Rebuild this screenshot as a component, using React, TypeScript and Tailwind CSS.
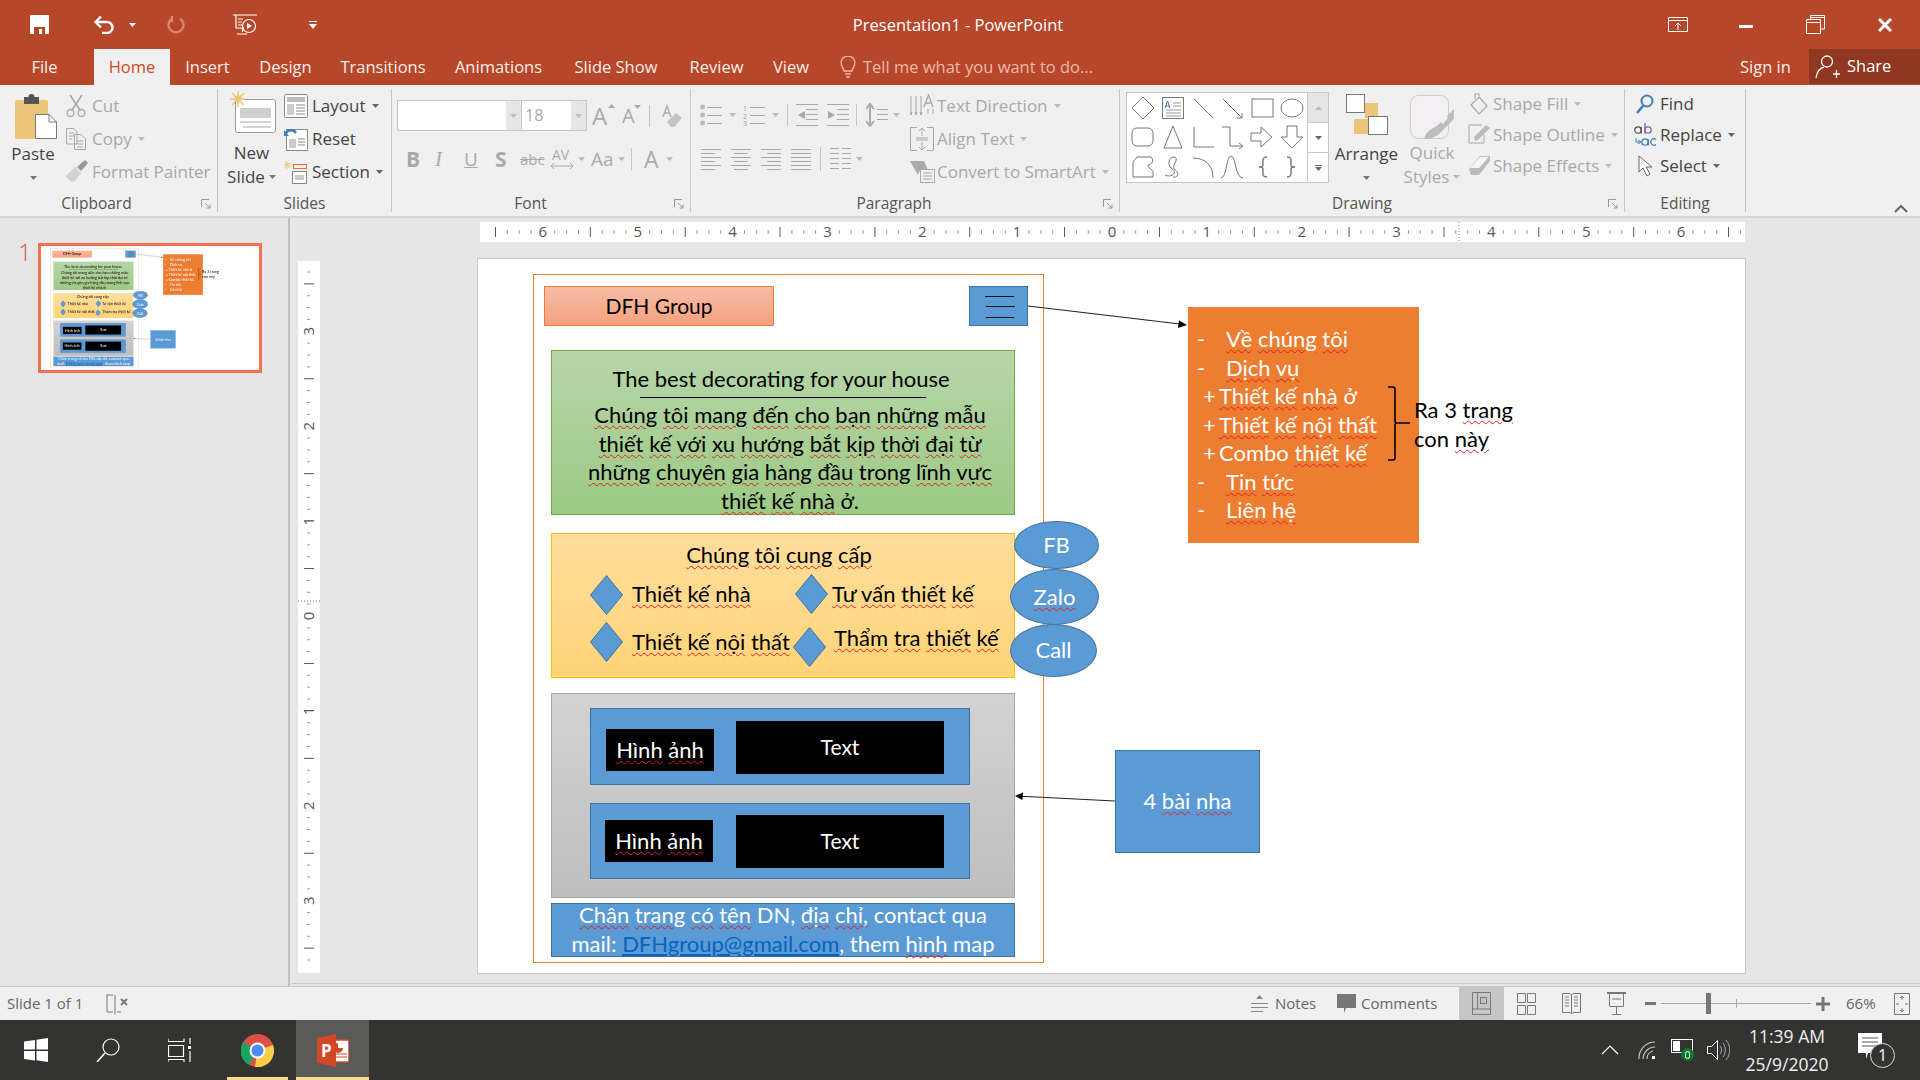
import React, { Fragment } from "react";

const D = "#a8a8a8";
const sq = "underline decoration-wavy decoration-[#e02020] decoration-1 underline-offset-2";

function Sq({ t }: { t: string }) {
  return (
    <span className="whitespace-pre">
      {t.split(" ").map((w, i) => (
        <Fragment key={i}>
          {i > 0 ? " " : ""}
          <span className={sq}>{w}</span>
        </Fragment>
      ))}
    </span>
  );
}

function Caret({ c = "#777" }: { c?: string }) {
  return (
    <svg width="7" height="4" viewBox="0 0 7 4" className="shrink-0">
      <path d="M0 0H7L3.5 4Z" fill={c} />
    </svg>
  );
}

function Launcher() {
  return (
    <svg width="10" height="10" viewBox="0 0 10 10" className="absolute right-[6px] bottom-[3px]">
      <path d="M.5 8V.5H8M4 4L9 9M9 5.5V9H5.5" fill="none" stroke="#999" />
    </svg>
  );
}

function Group({ w, label, children, lp = "" }: { w: string; label: string; children: React.ReactNode; lp?: string }) {
  return (
    <div className={`relative flex flex-col h-[123px] border-r border-[#c6c6c6] shrink-0 ${w}`}>
      <div className="h-[106px] flex">{children}</div>
      <div className={`h-[17px] leading-[17px] text-center text-[15.5px] text-[#555] ${lp}`}>{label}</div>
    </div>
  );
}

function Row({ icon, text, off, caret, h = "h-[33px]", w = "w-[24px]", tx = "ml-[4px]" }: { icon: React.ReactNode; text: string; off?: boolean; caret?: boolean; h?: string; w?: string; tx?: string }) {
  return (
    <div className={`flex items-center ${h}`}>
      <span className={`flex justify-center shrink-0 ${w}`}>{icon}</span>
      <span className={`${tx} text-[17px] whitespace-nowrap ${off ? "text-[#a8a8a8]" : "text-[#444]"}`}>{text}</span>
      {caret && (
        <span className="ml-[6px]">
          <Caret c={off ? "#bbb" : "#666"} />
        </span>
      )}
    </div>
  );
}

function Svg({ w, h, children, className = "" }: { w: number; h: number; children: React.ReactNode; className?: string }) {
  return (
    <svg width={w} height={h} viewBox={`0 0 ${w} ${h}`} fill="none" className={`shrink-0 ${className}`}>
      {children}
    </svg>
  );
}

function Lines({ x = 0, ys, w, c = D }: { x?: number; ys: number[]; w: number; c?: string }) {
  return (
    <>
      {ys.map((y) => (
        <path key={y} d={`M${x} ${y + 0.5}h${w}`} stroke={c} />
      ))}
    </>
  );
}

function TitleBar() {
  return (
    <div className="h-[49px] flex items-center relative text-white shrink-0">
      <Svg w={19} h={19} className="ml-[30px]">
        <path d="M1 0H18a1 1 0 0 1 1 1V18a1 1 0 0 1-1 1H1a1 1 0 0 1-1-1V1a1 1 0 0 1 1-1Z" fill="#fff" />
        <rect x="4" y="12" width="11" height="7" fill="#B7472A" />
        <rect x="9" y="14" width="3" height="5" fill="#fff" />
      </Svg>
      <Svg w={22} h={19} className="ml-[44px]">
        <path d="M8 1.5L2.5 7L8 12.5M3 7H14a5.5 5.5 0 0 1 0 11H9" stroke="#fff" strokeWidth="2.4" />
      </Svg>
      <span className="ml-[14px]"><Caret c="#fff" /></span>
      <Svg w={19} h={20} className="ml-[31px]">
        <path d="M13 3.5A7.5 7.5 0 1 1 5 3.5M5 1V7" stroke="#D98A70" strokeWidth="2.2" />
      </Svg>
      <Svg w={24} h={22} className="ml-[47px]">
        <path d="M0 1H24M3 1V14H11M9.5 14V18M4 20H14M5 5H10M5 8H9M5 11H9" stroke="#fff" strokeWidth="1.2" />
        <circle cx="16" cy="12" r="6.5" stroke="#fff" strokeWidth="1.2" />
        <path d="M14 9V15L19 12Z" fill="#fff" />
      </Svg>
      <Svg w={8} h={8} className="ml-[52px]">
        <path d="M0 .5H8M0 3H8L4 8Z" stroke="none" fill="#fff" />
        <path d="M0 .5H8" stroke="#fff" />
      </Svg>
      <div className="w-[1916px] absolute pointer-events-none text-center text-[16.5px] top-[14px] leading-[22px]">Presentation1 - PowerPoint</div>
      <Svg w={20} h={15} className="ml-[1351px]">
        <path d="M.5.5H19.5V14.5H.5ZM.5 3.5H19.5M10 13V6M7 9L10 6L13 9" stroke="#fff" />
      </Svg>
      <Svg w={14} h={3} className="ml-[51px] mt-[4px]">
        <rect width="14" height="3" fill="#fff" />
      </Svg>
      <Svg w={19} h={19} className="ml-[53px]">
        <path d="M4.5 4.5V.5H18.5V14H14.5M.5 4.5H14.5V18.5H.5ZM.5 7.5H14.5M4.5 2.5H18.5" stroke="#fff" />
      </Svg>
      <Svg w={14} h={14} className="ml-[53px]">
        <path d="M1 1L13 13M13 1L1 13" stroke="#fff" strokeWidth="3" />
      </Svg>
    </div>
  );
}

function Tabs() {
  const t = "flex items-center justify-center h-full shrink-0";
  return (
    <div className="h-[36px] flex text-[16.5px] text-[#fbeee9] shrink-0">
      <div className={`${t} w-[94px] pr-[5px]`}>File</div>
      <div className={`${t} w-[76px] bg-[#f0f0f0] text-[#d24726]`}>Home</div>
      <div className={`${t} w-[75px]`}>Insert</div>
      <div className={`${t} w-[81px]`}>Design</div>
      <div className={`${t} w-[114px]`}>Transitions</div>
      <div className={`${t} w-[117px]`}>Animations</div>
      <div className={`${t} w-[118px]`}>Slide Show</div>
      <div className={`${t} w-[83px]`}>Review</div>
      <div className={`${t} w-[66px]`}>View</div>
      <div className="flex items-center ml-[16px] text-[#eeb9a8] w-[900px] shrink-0">
        <Svg w={16} h={23}>
          <path d="M4 15C3 11 1 10 1 7A7 7 0 0 1 15 7C15 10 13 11 12 15ZM5 18H11M6 21H10" stroke="#eeb9a8" strokeWidth="1.3" />
        </Svg>
        <span className="ml-[7px]">Tell me what you want to do...</span>
      </div>
      <div className="flex items-center w-[69px] shrink-0">Sign in</div>
      <div className="flex items-center w-[111px] h-[35px] bg-[#8F3720] pl-[6px] text-white shrink-0">
        <Svg w={25} h={25}>
          <circle cx="12" cy="7.5" r="5.5" stroke="#fff" strokeWidth="1.3" />
          <path d="M1 24C2 17 5 14 9 13M18 20H25M21.5 16V24" stroke="#fff" strokeWidth="1.3" />
        </Svg>
        <span className="ml-[7px]">Share</span>
      </div>
    </div>
  );
}

function Clipboard() {
  return (
    <Group w="w-[218px]" label="Clipboard" lp="pr-[24px]">
      <div className="w-[66px] flex flex-col items-center">
        <Svg w={42} h={45} className="mt-[5px] ml-[6px]">
          <rect x="0" y="6" width="33" height="39" rx="2" fill="#EDC57A" />
          <rect x="9" y="3" width="15" height="7" fill="#555" />
          <circle cx="16.5" cy="3" r="3" fill="#555" />
          <path d="M20.5 20.5H34L41.5 28V44.5H20.5Z" fill="#fff" stroke="#777" />
          <path d="M34 20.5V28H41.5" stroke="#777" />
        </Svg>
        <div className="mt-[4px] text-[17px] leading-[22px] text-[#444]">Paste</div>
        <div className="mt-[11px]"><Caret /></div>
      </div>
      <div className="flex flex-col">
        <Row off text="Cut" w="w-[20px]" tx="ml-[6px]" icon={
          <Svg w={20} h={22}>
            <path d="M4 0L14 15M16 0L6 15" stroke={D} strokeWidth="1.6" />
            <circle cx="4.5" cy="18" r="3.5" stroke={D} strokeWidth="1.3" />
            <circle cx="15.5" cy="18" r="3.5" stroke={D} strokeWidth="1.3" />
          </Svg>
        } />
        <Row off caret text="Copy" w="w-[20px]" tx="ml-[6px]" icon={
          <Svg w={20} h={22}>
            <path d="M.5.5H8L11 4V16H.5ZM8.5 6.5H15L19.5 11V21.5H8.5ZM3 5H8M3 8H8M3 11H6M11 13H17M11 16H17M11 19H17" stroke={D} />
          </Svg>
        } />
        <Row off text="Format Painter" w="w-[20px]" tx="ml-[6px]" icon={
          <Svg w={23} h={23}>
            <path d="M1 16L10 7L16 13L9 22C6 22 2 19 1 16Z" fill="#d4d0d4" />
            <path d="M12 7L20 0L23 3L16 11Z" fill="#999" />
          </Svg>
        } />
      </div>
      <Launcher />
    </Group>
  );
}

function Slides() {
  return (
    <Group w="w-[174px]" label="Slides">
      <div className="w-[65px] ml-[1px] flex flex-col items-center relative">
        <Svg w={46} h={42} className="mt-[2px] ml-[3px]">
          <rect x="5.5" y="8.5" width="40" height="33" rx="2" fill="#fff" stroke="#999" />
          <rect x="10" y="17" width="31" height="10" fill="#d0d0d0" />
          <path d="M10 31H41M13 36H41" stroke="#aaa" />
          <path d="M8 0V16M0 8H16M2 2L14 14M14 2L2 14" stroke="#EFC77C" strokeWidth="1.6" />
          <circle cx="8" cy="8" r="3.5" fill="#EFC77C" />
        </Svg>
        <div className="mt-[9px] text-[17px] leading-[22px] text-[#444]">New</div>
        <div className="mt-[2px] text-[17px] leading-[22px] text-[#444] flex items-center">
          Slide<span className="ml-[4px]"><Caret /></span>
        </div>
      </div>
      <div className="flex flex-col">
        <Row text="Layout" caret icon={
          <Svg w={24} h={24}>
            <rect x=".5" y=".5" width="23" height="23" rx="1" fill="#fff" stroke="#888" />
            <rect x="3" y="3" width="18" height="5" fill="#bbb" />
            <rect x="3" y="10" width="7" height="11" fill="#ccc" />
            <path d="M12 11H21M12 14H21M12 17H21M12 20H21" stroke="#888" />
          </Svg>
        } />
        <Row text="Reset" icon={
          <Svg w={24} h={24}>
            <rect x="2.5" y="2.5" width="21" height="21" fill="#fff" stroke="#888" />
            <rect x="5" y="12" width="7" height="9" fill="#ccc" />
            <path d="M14 12H21M14 15H21M14 18H21" stroke="#888" />
            <path d="M2 6A6 6 0 0 1 12 6" stroke="#3F7FB8" strokeWidth="2.5" />
            <path d="M0 3L5 9H0Z" fill="#3F7FB8" />
          </Svg>
        } />
        <Row text="Section" caret icon={
          <Svg w={24} h={24}>
            <path d="M3 1V9M0 5H8M1 2L6 8M6 2L1 8" stroke="#EFC77C" />
            <rect x="9.5" y="4.5" width="13" height="4" stroke="#D9743F" />
            <rect x="8.5" y="11.5" width="14" height="12" fill="#fff" stroke="#888" />
            <rect x="11" y="15" width="9" height="5" fill="#ccc" />
          </Svg>
        } />
      </div>
    </Group>
  );
}

function Font() {
  return (
    <Group w="w-[299px]" label="Font" lp="pr-[21px]">
      <div className="flex flex-col">
        <div className="flex items-center mt-[11px] ml-[5px] h-[31px]">
          <div className="w-[125px] h-[31px] bg-white border border-[#c6c6c6] flex justify-end">
            <span className="w-[15px] bg-[#e6e6e6] flex items-center justify-center"><Caret c="#c0c0c0" /></span>
          </div>
          <div className="w-[65px] h-[31px] bg-white border border-l-0 border-[#c6c6c6] flex justify-between">
            <span className="ml-[3px] text-[16px] leading-[29px] text-[#aaa]">18</span>
            <span className="w-[15px] bg-[#e6e6e6] flex items-center justify-center"><Caret c="#c0c0c0" /></span>
          </div>
          <span className="ml-[5px] w-[16px] text-[24px] leading-[30px] text-[#aaa] relative">
            A<span className="absolute -right-[7px] top-[3px]"><Svg w={7} h={4}><path d="M0 4H7L3.5 0Z" fill="#aaa" /></Svg></span>
          </span>
          <span className="ml-[14px] w-[14px] text-[20px] leading-[30px] text-[#aaa] relative">
            A<span className="absolute -right-[5px] top-[4px]"><Svg w={7} h={4}><path d="M0 0H7L3.5 4Z" fill="#aaa" /></Svg></span>
          </span>
          <span className="ml-[13px] w-px h-[22px] bg-[#c6c6c6]" />
          <span className="ml-[12px] relative">
            <Svg w={20} h={24}>
              <path d="M1 13L5 2L9 13M2.5 9H7.5" stroke="#aaa" strokeWidth="1.4" />
              <path d="M5 18L14 9L20 14L12 23H9Z" fill="#c4c4c4" />
            </Svg>
          </span>
        </div>
        <div className="flex items-center mt-[14px] h-[28px] ml-[14px] whitespace-nowrap">
          <span className="w-[12px] font-bold text-[21px] text-[#a8a8a8] leading-[28px]">B</span>
          <span className="ml-[17px] w-[12px] text-[21px] italic font-['Liberation_Serif',serif] text-[#aaa] leading-[28px]">I</span>
          <span className="ml-[17px] w-[14px] text-[19px] text-[#aaa] underline leading-[28px]">U</span>
          <span className="ml-[17px] w-[13px] font-bold text-[21px] text-[#a8a8a8] leading-[28px]">S</span>
          <span className="ml-[12px] w-[24px] text-[15px] text-[#aaa] line-through leading-[28px]">abc</span>
          <span className="ml-[7px] w-[22px]">
            <Svg w={22} h={24}>
              <text x="1" y="13" fontSize="14" fill="#aaa" fontFamily="Open Sans">AV</text>
              <path d="M0 19H22M3 16L0 19L3 22M19 16L22 19L19 22" stroke="#aaa" />
            </Svg>
          </span>
          <span className="ml-[5px]"><Caret c="#bbb" /></span>
          <span className="ml-[6px] w-[22px] text-[19px] text-[#aaa] leading-[28px]">Aa</span>
          <span className="ml-[5px]"><Caret c="#bbb" /></span>
          <span className="ml-[6px] w-px h-[22px] bg-[#c6c6c6]" />
          <span className="ml-[12px] w-[15px] text-[23px] text-[#aaa] leading-[28px]">A</span>
          <span className="ml-[7px]"><Caret c="#bbb" /></span>
        </div>
      </div>
      <Launcher />
    </Group>
  );
}

function Align({ a }: { a: "l" | "c" | "r" | "j" }) {
  const long = 20;
  const s = 14;
  const x = a === "l" || a === "j" ? 0 : a === "c" ? 3 : 6;
  const w2 = a === "j" ? long : s;
  return (
    <Svg w={20} h={22}>
      {[1, 9, 17].map((y) => <path key={y} d={`M0 ${y + 0.5}h${long}`} stroke={D} />)}
      {[5, 13, 21].map((y) => <path key={y} d={`M${x} ${y + 0.5}h${w2}`} stroke={D} />)}
    </Svg>
  );
}

function Paragraph() {
  return (
    <Group w="w-[429px]" label="Paragraph" lp="pr-[22px]">
      <div className="w-[218px] shrink-0 flex flex-col">
        <div className="flex items-center h-[24px] mt-[14px] ml-[9px]">
          <Svg w={22} h={22}>
            <circle cx="2.5" cy="3" r="2.5" fill="#bbb" /><circle cx="2.5" cy="11" r="2.5" fill="#bbb" /><circle cx="2.5" cy="19" r="2.5" fill="#bbb" />
            <Lines x={7} ys={[3, 11, 19]} w={15} />
          </Svg>
          <span className="ml-[7px]"><Caret c="#bbb" /></span>
          <Svg w={22} h={22} className="ml-[7px]">
            <text x="0" y="7" fontSize="7" fill="#999">1</text><text x="0" y="15" fontSize="7" fill="#999">2</text><text x="0" y="22" fontSize="7" fill="#999">3</text>
            <Lines x={7} ys={[3, 11, 19]} w={15} />
          </Svg>
          <span className="ml-[7px]"><Caret c="#bbb" /></span>
          <span className="ml-[8px] w-px h-[22px] bg-[#c6c6c6]" />
          <Svg w={22} h={22} className="ml-[8px]">
            <Lines ys={[0, 21]} w={22} />
            <Lines x={10} ys={[5, 10, 15]} w={12} />
            <path d="M9 7L2 11L9 15Z" fill="#aaa" />
          </Svg>
          <Svg w={22} h={22} className="ml-[9px]">
            <Lines ys={[0, 21]} w={22} />
            <Lines x={10} ys={[5, 10, 15]} w={12} />
            <path d="M1 7L8 11L1 15Z" fill="#aaa" />
          </Svg>
          <span className="ml-[7px] w-px h-[22px] bg-[#c6c6c6]" />
          <Svg w={22} h={24} className="ml-[9px]">
            <path d="M4 1V23M0 6L4 1L8 6M0 18L4 23L8 18" stroke="#aaa" strokeWidth="2" />
            <Lines x={11} ys={[6, 11, 16]} w={11} />
          </Svg>
          <span className="ml-[5px]"><Caret c="#bbb" /></span>
        </div>
        <div className="flex items-center h-[24px] mt-[20px] ml-[10px]">
          <Align a="l" />
          <span className="ml-[10px]"><Align a="c" /></span>
          <span className="ml-[10px]"><Align a="r" /></span>
          <span className="ml-[10px]"><Align a="j" /></span>
          <span className="ml-[9px] w-px h-[24px] bg-[#c6c6c6]" />
          <Svg w={21} h={24} className="ml-[9px]">
            {[1, 6, 11, 16, 21].map((y) => <path key={y} d={`M0 ${y + 0.5}h9M12 ${y + 0.5}h9`} stroke={D} />)}
          </Svg>
          <span className="ml-[5px]"><Caret c="#bbb" /></span>
        </div>
      </div>
      <div className="flex flex-col">
        <Row off caret text="Text Direction" w="w-[26px]" tx="ml-[2px]" icon={
          <Svg w={25} h={24}>
            <path d="M1 2V20M6 2V20M11 2V20M0 18L1 21L2 18M5 18L6 21L7 18M10 18L11 21L12 18M18 15V20M23 15V20" stroke={D} />
            <path d="M14 13L18.5 1L23 13M15.5 9H21.5" stroke={D} strokeWidth="1.3" />
          </Svg>
        } />
        <Row off caret text="Align Text" w="w-[26px]" tx="ml-[2px]" icon={
          <Svg w={24} h={24}>
            <path d="M7 .5H.5V23.5H7M17 .5H23.5V23.5H17M12 1V9M9 4L12 1L15 4M12 15V23M9 20L12 23L15 20M6 11H18M6 13H18" stroke={D} />
          </Svg>
        } />
        <Row off caret text="Convert to SmartArt" w="w-[26px]" tx="ml-[2px]" icon={
          <Svg w={25} h={24}>
            <path d="M0 1H14L18 10L10 10L8 15L0 1Z" fill="#aaa" />
            <rect x="10.5" y="9.5" width="14" height="13" fill="#f0f0f0" stroke={D} />
            <path d="M13 13H22M13 16H22M13 19H22" stroke={D} />
          </Svg>
        } />
      </div>
      <Launcher />
    </Group>
  );
}

const shapes: React.ReactNode[] = [
  <path d="M12 1L23 12L12 23L1 12Z" />,
  <g><rect x="1.5" y="1.5" width="21" height="21" /><path d="M12 7H20M12 10H20M5 14H20M5 17H20M5 20H20" stroke="#999" /><path d="M4 12L6.5 5L9 12M5 10H8" stroke="#3F70B5" /></g>,
  <path d="M3 3L22 22" />,
  <path d="M3 3L22 22M22 17V22H17" />,
  <rect x="2" y="3" width="21" height="18" />,
  <ellipse cx="12" cy="12" rx="11" ry="9" />,
  <rect x="1" y="3" width="21" height="18" rx="5" />,
  <path d="M12 1L21 23H3Z" />,
  <path d="M3 2V22H23" />,
  <path d="M2 2H10V21H22M19 18L23 21L19 24" />,
  <path d="M1 8H11V2L22 12L11 22V16H1Z" />,
  <path d="M7 1H17V12H23L12 23L1 12H7Z" />,
  <path d="M6 2H20C24 6 20 10 17 10C17 14 23 14 22 18V22H2V7Z" />,
  <path d="M4 20C10 23 18 18 10 13C6 9 8 2 13 2C19 3 11 10 13 14C19 18 17 23 12 22" />,
  <path d="M2 3C14 3 22 10 22 23" />,
  <path d="M1 23C7 23 6 1 11 1C16 1 15 23 23 23" />,
  <path d="M17 2C12 2 13 5 13 10C13 11 12 12 9 12C12 12 13 13 13 14C13 19 12 22 17 22" strokeWidth="1.4" />,
  <path d="M7 2C12 2 11 5 11 10C11 11 12 12 15 12C12 12 11 13 11 14C11 19 12 22 7 22" strokeWidth="1.4" />,
];

function Drawing() {
  return (
    <Group w="w-[505px]" label="Drawing" lp="pr-[20px]">
      <div className="ml-[6px] mt-[3px] h-[91px] w-[203px] shrink-0 flex bg-white border border-[#c6c6c6]">
        <div className="w-[181px] grid grid-cols-6 grid-rows-3 border-r border-[#c6c6c6] pl-[1px]">
          {shapes.map((s, i) => (
            <div key={i} className="flex items-center justify-center">
              <svg width="24" height="24" viewBox="0 0 24 24" fill="none" stroke="#777">{s}</svg>
            </div>
          ))}
        </div>
        <div className="flex-1 flex flex-col">
          <div className="flex-1 bg-[#e6e6e6] border-b border-[#c6c6c6] flex items-center justify-center">
            <Svg w={7} h={4}><path d="M0 4H7L3.5 0Z" fill="#bbb" /></Svg>
          </div>
          <div className="flex-1 border-b border-[#c6c6c6] flex items-center justify-center"><Caret c="#666" /></div>
          <div className="flex-1 flex flex-col items-center justify-center gap-[1px]">
            <div className="w-[7px] h-px bg-[#666]" />
            <Caret c="#666" />
          </div>
        </div>
      </div>
      <div className="w-[75px] shrink-0 flex flex-col items-center">
        <Svg w={42} h={41} className="mt-[5px]">
          <rect x="19" y="9" width="13" height="15" fill="#EDC57A" />
          <rect x="8" y="25" width="14" height="15" fill="#EDC57A" />
          <rect x=".5" y=".5" width="18" height="18" fill="#fff" stroke="#777" />
          <rect x="22.5" y="22.5" width="19" height="18" fill="#fff" stroke="#777" />
        </Svg>
        <div className="mt-[8px] text-[17px] leading-[22px] text-[#444]">Arrange</div>
        <div className="mt-[11px]"><Caret /></div>
      </div>
      <div className="w-[56px] shrink-0 flex flex-col items-center">
        <Svg w={44} h={45} className="mt-[6px]">
          <rect x=".5" y=".5" width="38" height="43" rx="8" fill="#F3EFF3" stroke="#ccc" />
          <path d="M44 14V24L28 40L20 44H14C16 36 22 34 28 30Z" fill="#bdbdbd" />
          <path d="M30 26L36 20L38 23L33 29Z" fill="#F3EFF3" />
        </Svg>
        <div className="mt-[2px] text-[17px] leading-[22px] text-[#a8a8a8]">Quick</div>
        <div className="mt-[2px] text-[17px] leading-[22px] text-[#a8a8a8] flex items-center whitespace-nowrap">
          Styles<span className="ml-[4px]"><Caret c="#bbb" /></span>
        </div>
      </div>
      <div className="ml-[8px] flex flex-col -mt-px">
        <Row off caret h="h-[31px]" w="w-[22px]" tx="ml-[3px]" text="Shape Fill" icon={
          <Svg w={19} h={22}>
            <path d="M1 12L9 4L17 13L9 21ZM9 4V1H5V6" stroke={D} strokeWidth="1.2" />
          </Svg>
        } />
        <Row off caret h="h-[31px]" w="w-[22px]" tx="ml-[3px]" text="Shape Outline" icon={
          <Svg w={22} h={21}>
            <path d="M14 1H1V19H16V11" stroke={D} />
            <path d="M7 17L6 13L18 1L22 4L10 16Z" fill="#bbb" />
          </Svg>
        } />
        <Row off caret h="h-[31px]" w="w-[22px]" tx="ml-[3px]" text="Shape Effects" icon={
          <Svg w={22} h={21}>
            <path d="M1 14L12 1H22V6L11 20H3Z" fill="#bbb" />
            <path d="M2 13L12 2H21L11 13Z" fill="#f4f4f4" />
          </Svg>
        } />
      </div>
      <Launcher />
    </Group>
  );
}

function Editing() {
  return (
    <Group w="w-[121px]" label="Editing">
      <div className="ml-[10px] flex flex-col -mt-px">
        <Row h="h-[31px]" w="w-[20px]" tx="ml-[5px]" text="Find" icon={
          <Svg w={18} h={20}>
            <circle cx="11" cy="7" r="5.5" stroke="#3F7FB8" strokeWidth="2" />
            <path d="M7 12L1 19" stroke="#3F7FB8" strokeWidth="2.6" />
          </Svg>
        } />
        <Row h="h-[31px]" w="w-[20px]" tx="ml-[5px]" text="Replace" caret icon={
          <svg width="23" height="24" viewBox="0 0 23 24" fill="none" className="shrink-0">
            <circle cx="4" cy="7" r="3.2" stroke="#555" strokeWidth="1.3" />
            <path d="M7.2 4V10.5" stroke="#555" strokeWidth="1.3" />
            <path d="M11 0V10.5" stroke="#8A5CA8" strokeWidth="1.3" />
            <circle cx="14" cy="7" r="3.2" stroke="#8A5CA8" strokeWidth="1.3" />
            <path d="M2 15V19H6M4 17L7 19L4 21" stroke="#3F7FB8" />
            <circle cx="11" cy="19" r="3.2" stroke="#3F7FB8" strokeWidth="1.3" />
            <path d="M14.2 16V22.5" stroke="#3F7FB8" strokeWidth="1.3" />
            <path d="M22 16.5A3.2 3.2 0 1 0 22 21.5" stroke="#3F7FB8" strokeWidth="1.3" />
          </svg>
        } />
        <Row h="h-[31px]" w="w-[20px]" tx="ml-[5px]" text="Select" caret icon={
          <Svg w={15} h={22}>
            <path d="M1 1V17L5 13L9 21L12 19L8 12H14Z" fill="#fff" stroke="#666" />
          </Svg>
        } />
      </div>
    </Group>
  );
}

function Ribbon() {
  return (
    <div className="h-[133px] bg-[#f0f0f0] flex pt-[4px] border-b-2 border-[#d4d4d4] shrink-0">
      <Clipboard />
      <Slides />
      <Font />
      <Paragraph />
      <Drawing />
      <Editing />
      <div className="flex-1 flex items-end justify-end pr-[12px] pb-[3px]">
        <Svg w={14} h={9}>
          <path d="M1 8L7 2L13 8" stroke="#666" strokeWidth="2" />
        </Svg>
      </div>
    </div>
  );
}

const body = "font-['Lato','Noto_Sans',sans-serif]";

function SlideContent() {
  const t = "absolute whitespace-nowrap text-center";
  const blue = "bg-[#5B9BD5] border border-[#41719C]";
  const ell = "absolute rounded-[50%] bg-[#5B9BD5] border border-[#41719C] flex items-center justify-center text-white pb-[2px]";
  const blk = "absolute bg-black text-white flex items-center justify-center pb-[2px]";
  return (
    <div className={`relative w-[1267px] h-[714px] bg-white text-[22px] text-black ${body}`}>
      <div className="absolute left-[55px] top-[15px] w-[511px] h-[689px] border-[1.5px] border-[#ED7D31]" />
      <div className="absolute left-[66px] top-[27px] w-[230px] h-[40px] border border-[#ED7D31] bg-linear-to-b from-[#F7BEA6] to-[#F5A07F] flex items-center justify-center text-[21px] pb-[1px]">DFH Group</div>
      <div className={`absolute left-[491px] top-[27px] w-[59px] h-[40px] ${blue}`}>
        <svg width="57" height="38" viewBox="0 0 57 38">
          <path d="M15 9.5H44M16 19.5H45M16 30.5H44" stroke="#111" strokeWidth="1.2" />
        </svg>
      </div>

      <div className="absolute left-[73px] top-[91px] w-[464px] h-[165px] border border-[#70AD47] bg-linear-to-b from-[#B6D5A8] to-[#9CCA84]" />
      <div className={`${t} left-[71px] top-[106px] w-[464px] leading-[28px]`}>The best decorating for your house</div>
      <div className="absolute left-[162px] top-[138px] w-[286px] h-px bg-black" />
      <div className={`${t} left-[80px] top-[142px] w-[464px] leading-[28.6px]`}>
        <Sq t="Chúng tôi mang đến cho bạn những mẫu" /><br />
        <Sq t="thiết kế với xu hướng bắt kịp thời đại từ" /><br />
        <Sq t="những chuyên gia hàng đầu trong lĩnh vực" /><br />
        <Sq t="thiết kế nhà" /> ở.
      </div>

      <div className="absolute left-[73px] top-[274px] w-[464px] h-[145px] border border-[#FFC000] bg-linear-to-b from-[#FFDD9C] to-[#FFD478]" />
      <div className={`${t} left-[69px] top-[282px] w-[464px] leading-[28px]`}><Sq t="Chúng tôi cung cấp" /></div>
      {[
        "left-[112px] top-[316px]",
        "left-[317px] top-[315px]",
        "left-[112px] top-[363px]",
        "left-[315px] top-[368px]",
      ].map((c) => (
        <svg key={c} width="33" height="40" viewBox="0 0 33 40" className={`absolute ${c}`}>
          <path d="M16.5 .5L32.5 20L16.5 39.5L.5 20Z" fill="#5B9BD5" stroke="#41719C" />
        </svg>
      ))}
      <div className="absolute left-[154px] top-[321px] whitespace-nowrap leading-[28px]"><Sq t="Thiết kế nhà" /></div>
      <div className="absolute left-[354px] top-[321px] whitespace-nowrap leading-[28px]"><Sq t="Tư vấn thiết kế" /></div>
      <div className="absolute left-[154px] top-[369px] whitespace-nowrap leading-[28px]"><Sq t="Thiết kế nội thất" /></div>
      <div className="absolute left-[356px] top-[365px] whitespace-nowrap leading-[28px]"><Sq t="Thẩm tra thiết kế" /></div>

      <div className={`${ell} left-[536px] top-[262px] w-[85px] h-[48px]`}>FB</div>
      <div className={`${ell} left-[532px] top-[310px] w-[89px] h-[56px]`}><Sq t="Zalo" /></div>
      <div className={`${ell} left-[532px] top-[365px] w-[87px] h-[53px]`}>Call</div>

      <div className="absolute left-[73px] top-[434px] w-[464px] h-[205px] border border-[#A5A5A5] bg-linear-to-b from-[#D3D3D3] to-[#BEBEBE]" />
      <div className={`absolute left-[112px] top-[449px] w-[380px] h-[77px] ${blue}`} />
      <div className={`${blk} left-[128px] top-[470px] w-[108px] h-[42px]`}><Sq t="Hình ảnh" /></div>
      <div className={`${blk} left-[258px] top-[462px] w-[208px] h-[53px] text-[21px]`}>Text</div>
      <div className={`absolute left-[112px] top-[544px] w-[380px] h-[76px] ${blue}`} />
      <div className={`${blk} left-[127px] top-[561px] w-[108px] h-[42px]`}><Sq t="Hình ảnh" /></div>
      <div className={`${blk} left-[258px] top-[556px] w-[208px] h-[53px] text-[21px]`}>Text</div>

      <div className={`absolute left-[73px] top-[644px] w-[464px] h-[54px] ${blue}`} />
      <div className={`${t} left-[73px] top-[641px] w-[464px] leading-[29px] text-white`}>
        <Sq t="Chân trang có tên" /> DN, <Sq t="địa chỉ," /> contact qua<br />
        mail: <span className="text-[#0563C1] underline">DFHgroup@gmail.com</span>, them <Sq t="hình" /> map
      </div>

      <div className="absolute left-[710px] top-[48px] w-[231px] h-[236px] bg-[#ED7D31] text-white pt-[18px] leading-[28.5px] whitespace-nowrap">
        {[["-", "Về chúng tôi"], ["-", "Dịch vụ"]].map(([a, b]) => (
          <div key={b} className="flex"><span className="ml-[9px] w-[29px]">{a}</span><Sq t={b} /></div>
        ))}
        <div className="flex whitespace-pre"><span className="ml-[15px] w-[16px]">+</span><span><Sq t="Thiết kế nhà" /> ở</span></div>
        <div className="flex whitespace-pre"><span className="ml-[15px] w-[16px]">+</span><span><Sq t="Thiết kế nội thất" /></span></div>
        <div className="flex whitespace-pre"><span className="ml-[15px] w-[16px]">+</span><span>Combo <Sq t="thiết kế" /></span></div>
        {[["-", "Tin tức"], ["-", "Liên hệ"]].map(([a, b]) => (
          <div key={b} className="flex whitespace-pre"><span className="ml-[9px] w-[29px]">{a}</span><Sq t={b} /></div>
        ))}
      </div>
      <svg width="22" height="75" viewBox="0 0 22 75" className="absolute left-[910px] top-[127px]" fill="none">
        <path d="M0 1H5Q7 1 7 3V35Q7 37 9 37H22M9 37Q7 37 7 39V72Q7 74 5 74H0" stroke="#000" strokeWidth="1.6" />
      </svg>
      <div className="absolute left-[936px] top-[136px] whitespace-nowrap leading-[29px]">
        Ra 3 <Sq t="trang" /><br />con <Sq t="này" />
      </div>

      <div className={`absolute left-[637px] top-[491px] w-[145px] h-[103px] ${blue} flex items-center justify-center text-white pb-[2px]`}>
        <span>4 <Sq t="bài nha" /></span>
      </div>

      <svg width="1267" height="714" viewBox="0 0 1267 714" className="absolute left-0 top-0 pointer-events-none" fill="none">
        <path d="M550 47L702 65" stroke="#222" strokeWidth="1.1" />
        <path d="M709 66L701 61.5L700 69Z" fill="#000" />
        <path d="M637 542L543 537.3" stroke="#222" strokeWidth="1.1" />
        <path d="M537 537L545 533.5L544.5 541Z" fill="#000" />
      </svg>
    </div>
  );
}

function HRuler() {
  const zero = 632;
  const inch = 94.85;
  const items: React.ReactNode[] = [];
  for (let i = -53; i <= 53; i++) {
    const x = zero + (i * inch) / 8;
    if (x < 4 || x > 1261) continue;
    if (i % 8 === 0) {
      items.push(<text key={i} x={x} y={15} textAnchor="middle" fontSize="15" fill="#555" fontFamily="Open Sans">{Math.abs(i / 8)}</text>);
    } else if (i % 4 === 0) {
      items.push(<path key={i} d={`M${x} 5V15`} stroke="#555" />);
    } else {
      items.push(<path key={i} d={`M${x} 8V12`} stroke="#999" />);
    }
  }
  return (
    <svg width="1265" height="20" viewBox="0 0 1265 20" className="block bg-white">
      {items}
      <path d="M979 0V20" stroke="#c55" strokeDasharray="1 2" />
    </svg>
  );
}

function VRuler() {
  const zero = 355;
  const inch = 94.9;
  const items: React.ReactNode[] = [];
  for (let i = -30; i <= 30; i++) {
    const y = zero + (i * inch) / 8;
    if (y < 6 || y > 706) continue;
    if (i % 8 === 0) {
      items.push(<text key={i} x={0} y={0} transform={`translate(16 ${y}) rotate(-90)`} textAnchor="middle" fontSize="15" fill="#555" fontFamily="Open Sans">{Math.abs(i / 8)}</text>);
    } else if (i % 4 === 0) {
      items.push(<path key={i} d={`M6 ${y}H16`} stroke="#555" />);
    } else {
      items.push(<path key={i} d={`M9 ${y}H12`} stroke="#999" />);
    }
  }
  return (
    <svg width="22" height="712" viewBox="0 0 22 712" className="block bg-white mt-[19px]">
      {items}
      <path d="M0 340H22" stroke="#666" strokeDasharray="1 2" />
    </svg>
  );
}

function Main() {
  return (
    <div className="h-[769px] bg-[#e6e6e6] flex overflow-hidden shrink-0 border-b border-[#c6c6c6]">
      <div className="w-[290px] shrink-0 border-r-2 border-[#c0c0c0] flex items-start pt-[25px]">
        <div className="w-[38px] pl-[18px] text-[24px] leading-[24px] -mt-[3px] text-[#D9573A] font-light">1</div>
        <div className="w-[224px] h-[130px] border-[3px] border-[#F4714F] bg-white overflow-hidden">
          <div className="w-[1267px] h-[714px] origin-top-left scale-[0.172] blur-[0.2px]">
            <SlideContent />
          </div>
        </div>
      </div>
      <div className="flex-1 flex flex-col relative">
        <div className="ml-[190px] mt-[4px]"><HRuler /></div>
        <div className="flex">
          <div className="ml-[8px] w-[22px]"><VRuler /></div>
          <div className="ml-[158px] mt-[17px] shadow-[0_0_0_1px_#c6c6c6]">
            <SlideContent />
          </div>
        </div>
        <div className="mt-[10px] ml-[2px] h-px bg-[#c6c6c6]" />
      </div>
    </div>
  );
}

function StatusBar() {
  const tx = "text-[15px] text-[#666] whitespace-nowrap";
  return (
    <div className="h-[33px] bg-[#f0f0f0] flex items-center shrink-0">
      <div className="w-[1251px] shrink-0 flex items-center">
        <span className={`${tx} ml-[7px] w-[99px]`}>Slide 1 of 1</span>
        <Svg w={22} h={20}>
          <path d="M7 1H1V18H7M9 1V20M11 18H15" stroke="#777" />
          <path d="M15 5L21 11M21 5L15 11" stroke="#777" strokeWidth="2" />
        </Svg>
      </div>
      <Svg w={17} h={17}>
        <path d="M5 4H12L8.5 0Z" fill="#888" />
        <path d="M0 8.5H17M0 12.5H17M0 16.5H12" stroke="#888" />
      </Svg>
      <span className={`${tx} ml-[7px] w-[40px]`}>Notes</span>
      <Svg w={19} h={19} className="ml-[22px]">
        <path d="M0 0H19V14H9L7 19V14H0Z" fill="#777" />
      </Svg>
      <span className={`${tx} ml-[5px] w-[75px]`}>Comments</span>
      <div className="ml-[23px] w-[45px] h-[33px] bg-[#c6c6c6] flex items-center justify-center">
        <Svg w={19} h={23}>
          <path d="M.5.5H18.5V22.5H.5ZM5.5.5V17M.5 17H18.5" stroke="#777" />
          <rect x="8.5" y="5.5" width="6" height="6" stroke="#777" />
        </Svg>
      </div>
      <div className="w-[45px] flex justify-center">
        <Svg w={19} h={22}>
          <path d="M.5.5H8.5V9.5H.5ZM10.5.5H18.5V9.5H10.5ZM.5 12.5H8.5V21.5H.5ZM10.5 12.5H18.5V21.5H10.5Z" stroke="#777" />
        </Svg>
      </div>
      <div className="w-[45px] flex justify-center">
        <Svg w={19} h={23}>
          <path d="M.5 1.5H8L9.5 3L11 1.5H18.5V20.5H11L9.5 22L8 20.5H.5ZM9.5 3V22M3 5H7M3 8H7M3 11H7M3 14H7M12 5H16M12 8H16M12 11H16M12 14H16" stroke="#777" />
        </Svg>
      </div>
      <div className="w-[45px] flex justify-center">
        <Svg w={19} h={23}>
          <path d="M0 1H19" stroke="#777" strokeWidth="2" />
          <path d="M2.5 2V14.5H16.5V2M5 7H14M9.5 15V22M5 22.5H14" stroke="#777" />
        </Svg>
      </div>
      <div className="ml-[6px] w-[11px] h-[3px] bg-[#777]" />
      <div className="ml-[5px] w-[150px] h-px bg-[#aaa] relative">
        <div className="absolute left-[45px] -top-[10px] w-[5px] h-[21px] bg-[#777]" />
        <div className="absolute left-[75px] -top-[4px] w-px h-[9px] bg-[#aaa]" />
      </div>
      <Svg w={14} h={14} className="ml-[5px]">
        <path d="M0 7H14M7 0V14" stroke="#777" strokeWidth="3" />
      </Svg>
      <span className={`${tx} ml-[16px] w-[31px]`}>66%</span>
      <Svg w={16} h={22} className="ml-[17px]">
        <path d="M.5.5H15.5V21.5H.5ZM8 3V7M6 5L8 3L10 5M8 15V19M6 17L8 19L10 17M2 11H5M11 11H14" stroke="#777" />
      </Svg>
    </div>
  );
}

function Taskbar() {
  const bar = "h-[60px] flex items-center justify-center shrink-0 border-b-[3px] border-[#FBD98C] pt-[3px]";
  return (
    <div className="h-[60px] bg-[#333331] flex items-center shrink-0 text-white">
      <Svg w={24} h={24} className="ml-[24px]">
        <path d="M0 3.5L11 2V11.5H0ZM12.5 1.8L24 0V11.5H12.5ZM0 13H11V22.5L0 21ZM12.5 13H24V24L12.5 22.3Z" fill="#fff" />
      </Svg>
      <Svg w={24} h={24} className="ml-[48px]">
        <circle cx="15" cy="9" r="8" stroke="#fff" strokeWidth="1.2" />
        <path d="M9 15L1 24" stroke="#fff" strokeWidth="1.5" />
      </Svg>
      <Svg w={24} h={24} className="ml-[48px]">
        <path d="M0 .5V3.5H16V.5M.5 7.5H15.5V18.5H.5ZM0 24V21.5H16V24M22 0V6M22 13V24" stroke="#fff" strokeWidth="1.2" />
        <rect x="20" y="8" width="3" height="3" fill="#fff" />
      </Svg>
      <div className={`${bar} ml-[35px] w-[61px]`}>
        <svg width="33" height="33" viewBox="0 0 33 33">
          <circle cx="16.5" cy="16.5" r="16.5" fill="#DD5144" />
          <path d="M16.5 16.5L8 31A16.5 16.5 0 0 1 2 8Z" fill="#1DA462" />
          <path d="M16.5 16.5L32 11A16.5 16.5 0 0 1 14 33Z" fill="#FFCD46" />
          <circle cx="16.5" cy="16.5" r="8" fill="#fff" />
          <circle cx="16.5" cy="16.5" r="6" fill="#4C8BF5" />
        </svg>
      </div>
      <div className={`${bar} ml-[8px] w-[73px] bg-[#5a5a58]`}>
        <svg width="32" height="33" viewBox="0 0 32 33">
          <rect x="15" y="6" width="17" height="22" fill="#fff" stroke="#D24726" strokeWidth="1.5" />
          <path d="M21 9A5 5 0 1 0 26 14H21Z" fill="#D24726" />
          <path d="M18 20H30M18 23H30" stroke="#D24726" />
          <path d="M0 4L19 0V33L0 29Z" fill="#D24726" />
          <text x="4" y="23" fontSize="17" fontWeight="700" fill="#fff" fontFamily="Open Sans">P</text>
        </svg>
      </div>
      <div className="w-[1232px] shrink-0" />
      <Svg w={18} h={10}>
        <path d="M1 9L9 1L17 9" stroke="#fff" strokeWidth="1.2" />
      </Svg>
      <Svg w={18} h={18} className="ml-[19px]">
        <path d="M1 18A16 16 0 0 1 17 1M5 18A12 12 0 0 1 17 6M9 18A8 8 0 0 1 15 10" stroke="#ccc" strokeWidth="1.1" />
        <rect x="14" y="15" width="3" height="3" fill="#fff" />
      </Svg>
      <div className="ml-[15px] w-[23px] h-[22px] relative">
        <Svg w={22} h={14}>
          <rect x=".5" y=".5" width="21" height="13" stroke="#fff" />
          <rect x="2" y="2" width="7" height="10" fill="#fff" />
        </Svg>
        <div className="absolute right-0 bottom-0 w-[13px] h-[13px] rounded-full bg-[#0b7a2a] flex items-center justify-center">
          <div className="w-[5px] h-[8px] rounded-full border border-white" />
        </div>
      </div>
      <Svg w={23} h={22} className="ml-[13px]">
        <path d="M.5 7.5H4.5L10.5 1.5V20.5L4.5 14.5H.5Z" stroke="#fff" />
        <path d="M13 7C15 9 15 13 13 15M16 4C19 8 19 14 16 18M19 1C24 7 24 15 19 21" stroke="#aaa" />
      </Svg>
      <div className="w-[114px] text-center text-[17.5px] leading-[28px] text-[#f0f0f0] whitespace-nowrap shrink-0">
        11:39 AM<br />25/9/2020
      </div>
      <div className="ml-[14px] w-[37px] h-[35px] relative">
        <Svg w={24} h={26}>
          <path d="M0 0H24V20H10L8 26V20H0Z" fill="#fff" />
          <path d="M4 5H20M4 9H20M4 13H20" stroke="#555" />
        </Svg>
        <div className="absolute right-0 bottom-0 w-[25px] h-[25px] rounded-full border border-[#ddd] bg-[#333331] flex items-center justify-center text-[16px] leading-none text-white">1</div>
      </div>
    </div>
  );
}

export default function App() {
  return (
    <div className="w-[1920px] h-[1080px] overflow-hidden flex flex-col bg-[#B7472A] font-['Open_Sans',sans-serif]">
      <TitleBar />
      <Tabs />
      <Ribbon />
      <Main />
      <StatusBar />
      <Taskbar />
    </div>
  );
}
